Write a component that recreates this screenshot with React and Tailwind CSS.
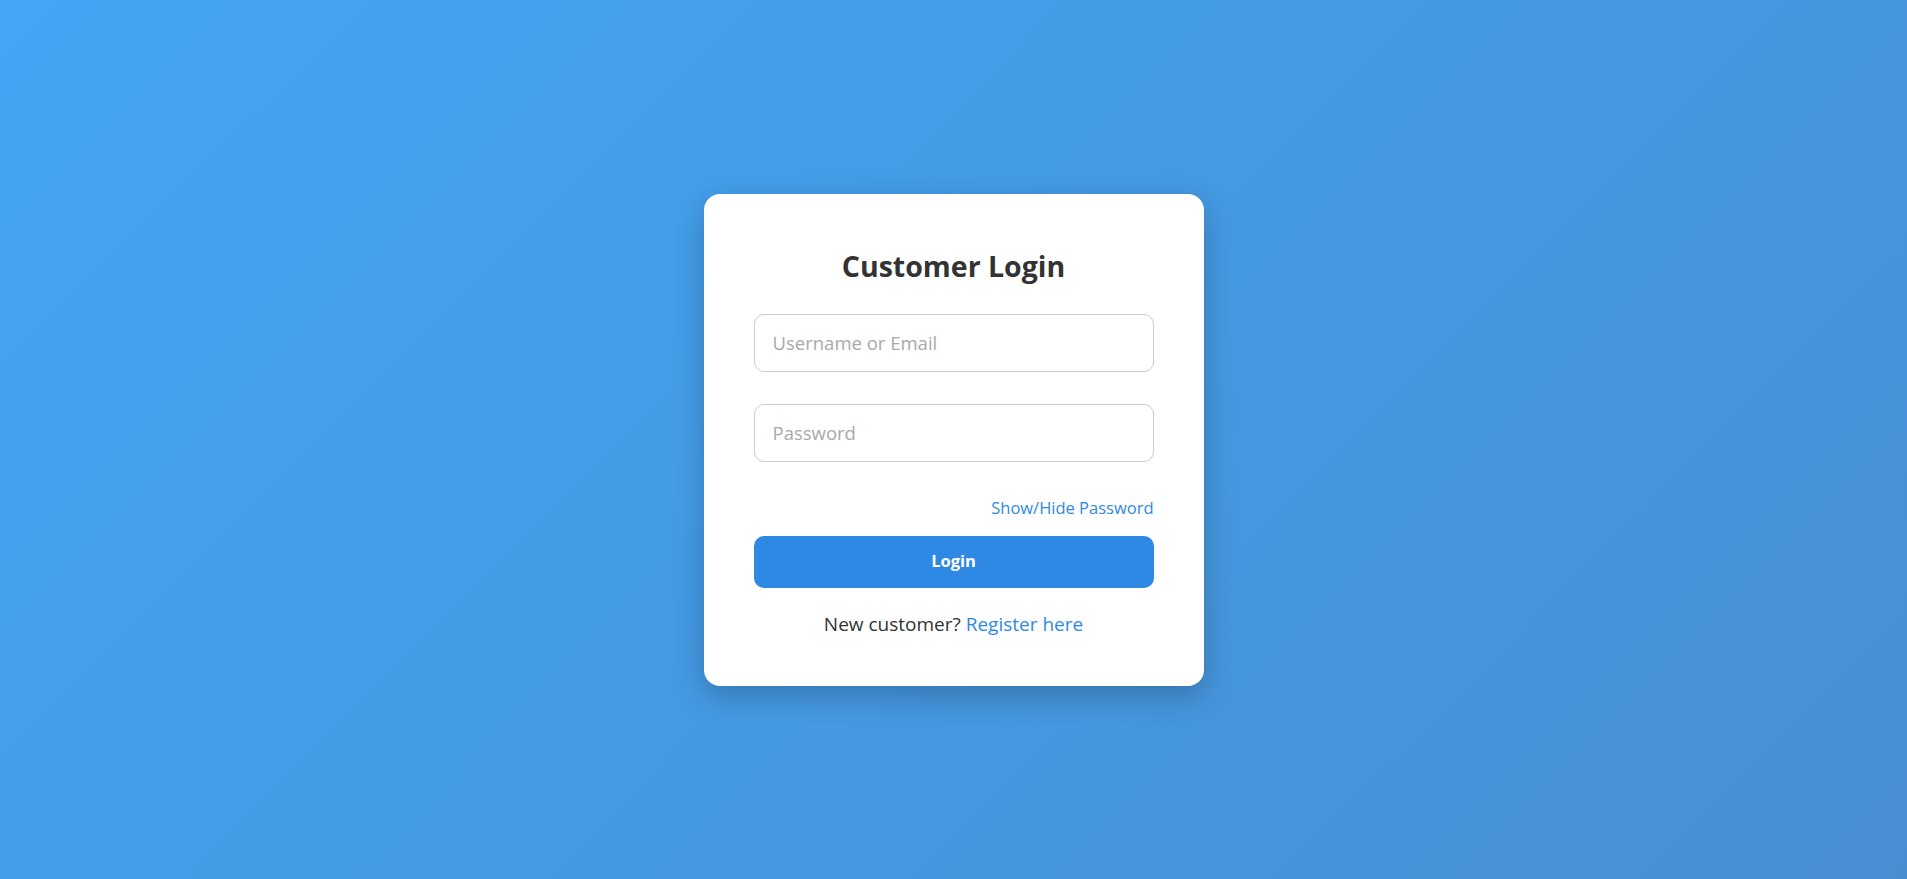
import { useState } from 'react';

// Customer login card on a blue gradient
export default function App() {
  const [showPassword, setShowPassword] = useState(false);

  return (
    <div
      className="min-h-screen w-full flex items-center justify-center bg-[linear-gradient(135deg,#42a5f5_0%,#478ed1_100%)]"
      style={{ fontFamily: '"Open Sans", "Noto Sans", sans-serif' }}
    >
      <div className="w-[500px] bg-white rounded-[16px] px-[50px] pt-[54px] pb-[48px] shadow-[0_10px_30px_rgba(0,0,0,0.22)]">
        <h2 className="text-center text-[28.5px] leading-[36px] font-bold text-[#333333]">Customer Login</h2>

        <form className="mt-[30px]" onSubmit={(e) => e.preventDefault()}>
          <input
            type="text"
            placeholder="Username or Email"
            className="block w-full h-[58px] px-[18px] text-[18.5px] text-[#333333] border border-[#cccccc] rounded-[10px] outline-none placeholder:text-[#a9a9a9]"
          />
          <input
            type={showPassword ? 'text' : 'password'}
            placeholder="Password"
            className="block w-full h-[58px] mt-[32px] px-[18px] text-[18.5px] text-[#333333] border border-[#cccccc] rounded-[10px] outline-none placeholder:text-[#a9a9a9]"
          />

          <div className="flex justify-end mt-[34px]">
            <button
              type="button"
              onClick={() => setShowPassword(!showPassword)}
              className="text-[16.5px] leading-[24px] text-[#2e89e4] cursor-pointer"
            >
              Show/Hide Password
            </button>
          </div>

          <button
            type="submit"
            className="block w-full h-[52px] mt-[16px] rounded-[10px] bg-[#2e89e4] text-white text-[16.5px] font-bold cursor-pointer"
          >
            Login
          </button>
        </form>

        <p className="mt-[23px] text-center text-[19px] leading-[27px] text-[#333333]">
          New customer? <a href="#" className="text-[#2e89e4]">Register here</a>
        </p>
      </div>
    </div>
  );
}
